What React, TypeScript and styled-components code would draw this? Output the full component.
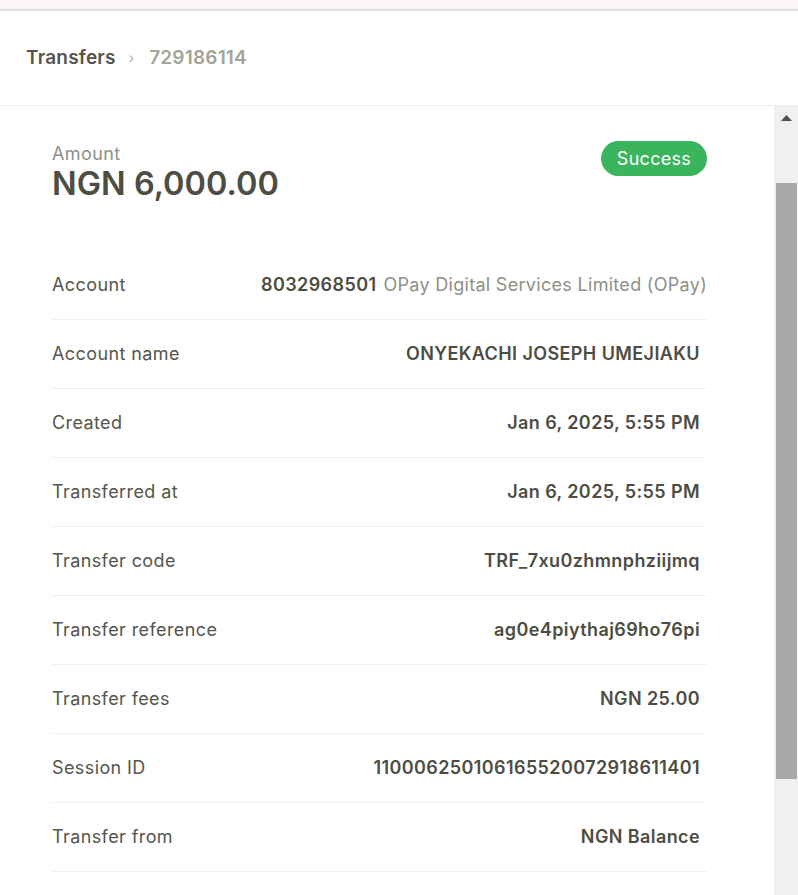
import React from "react";
import styled, { createGlobalStyle } from "styled-components";

const Global = createGlobalStyle`
  html, body { margin: 0; padding: 0; height: 100%; overflow: hidden; background: #fff; }
  body { font-family: Inter, "Noto Sans", sans-serif; color: #4d4d43; }
  * { box-sizing: border-box; }
`;

const Page = styled.div`
  display: flex;
  flex-direction: column;
  height: 895px;
`;

const TopStrip = styled.div`
  height: 11px;
  flex: none;
  background: #fcf7f7;
  border-bottom: 2px solid #e2dfe0;
`;

const Header = styled.header`
  flex: none;
  height: 95px;
  display: flex;
  align-items: center;
  padding: 0 26px 2px;
  border-bottom: 1px solid #efefef;
`;

const Crumb = styled.span<{ $muted?: boolean }>`
  font-size: 19px;
  font-weight: 600;
  letter-spacing: 0.2px;
  color: ${(p) => (p.$muted ? "#a3a397" : "#55554b")};
`;

const Chevron = styled.span`
  font-size: 14px;
  color: #b5b5ad;
  margin: 1px 15px 0 13px;
`;

const Body = styled.div`
  flex: 1;
  display: flex;
  min-height: 0;
`;

const Content = styled.main`
  flex: 1;
  min-width: 0;
  overflow: hidden;
  padding: 35px 67px 0 52px;
`;

const Rail = styled.div`
  flex: none;
  width: 24px;
  background: #f0f0f0;
  display: flex;
  flex-direction: column;
  align-items: flex-end;
`;

const RailButton = styled.div`
  width: 24px;
  height: 24px;
  display: flex;
  align-items: center;
  justify-content: center;
`;

const Thumb = styled.div`
  width: 21px;
  margin-right: 1px;
  margin-top: 53px;
  height: 596px;
  background: #a8a8a8;
`;

const Summary = styled.section`
  display: flex;
  justify-content: space-between;
  align-items: flex-start;
  margin-bottom: 48px;
`;

const AmountBlock = styled.div`
  display: flex;
  flex-direction: column;
`;

const AmountLabel = styled.span`
  font-size: 18px;
  line-height: 22px;
  letter-spacing: 0.4px;
  margin-top: 2px;
  color: #8f8f87;
`;

const AmountValue = styled.span`
  font-size: 32.5px;
  line-height: 38px;
  font-weight: 600;
  color: #4d4d43;
`;

const Badge = styled.span`
  display: inline-flex;
  align-items: center;
  justify-content: center;
  height: 35px;
  width: 106px;
  border-radius: 18px;
  background: #3bb55d;
  color: #fff;
  font-size: 18px;
  letter-spacing: 0.3px;
`;

const Row = styled.div`
  display: flex;
  align-items: center;
  justify-content: space-between;
  height: 69px;
  padding-bottom: 2px;
  border-bottom: 1px solid #f0f0f0;
`;

const Label = styled.span`
  font-size: 18px;
  letter-spacing: 0.4px;
  color: #55554b;
`;

const Value = styled.span<{ $flush?: boolean }>`
  font-size: 18px;
  letter-spacing: 0.4px;
  font-weight: 600;
  color: #4d4d43;
  padding-right: ${(p) => (p.$flush ? "0" : "7px")};
  display: flex;
  gap: 7px;
  align-items: baseline;
`;

const Sub = styled.span`
  font-weight: 400;
  letter-spacing: 0.3px;
  color: #8f8f87;
`;

const rows: [string, string][] = [
  ["Account name", "ONYEKACHI JOSEPH UMEJIAKU"],
  ["Created", "Jan 6, 2025, 5:55 PM"],
  ["Transferred at", "Jan 6, 2025, 5:55 PM"],
  ["Transfer code", "TRF_7xu0zhmnphziijmq"],
  ["Transfer reference", "ag0e4piythaj69ho76pi"],
  ["Transfer fees", "NGN 25.00"],
  ["Session ID", "110006250106165520072918611401"],
  ["Transfer from", "NGN Balance"],
];

export default function App() {
  return (
    <Page>
      <Global />
      <TopStrip />
      <Header>
        <Crumb>Transfers</Crumb>
        <Chevron>›</Chevron>
        <Crumb $muted>729186114</Crumb>
      </Header>
      <Body>
        <Content>
          <Summary>
            <AmountBlock>
              <AmountLabel>Amount</AmountLabel>
              <AmountValue>NGN 6,000.00</AmountValue>
            </AmountBlock>
            <Badge>Success</Badge>
          </Summary>
          <Row>
            <Label>Account</Label>
            <Value $flush>
              8032968501 <Sub>OPay Digital Services Limited (OPay)</Sub>
            </Value>
          </Row>
          {rows.map(([l, v]) => (
            <Row key={l}>
              <Label>{l}</Label>
              <Value>{v}</Value>
            </Row>
          ))}
        </Content>
        <Rail>
          <RailButton>
            <svg width="11" height="6" viewBox="0 0 11 6">
              <path d="M5.5 0 L11 6 L0 6 Z" fill="#505050" />
            </svg>
          </RailButton>
          <Thumb />
        </Rail>
      </Body>
    </Page>
  );
}
